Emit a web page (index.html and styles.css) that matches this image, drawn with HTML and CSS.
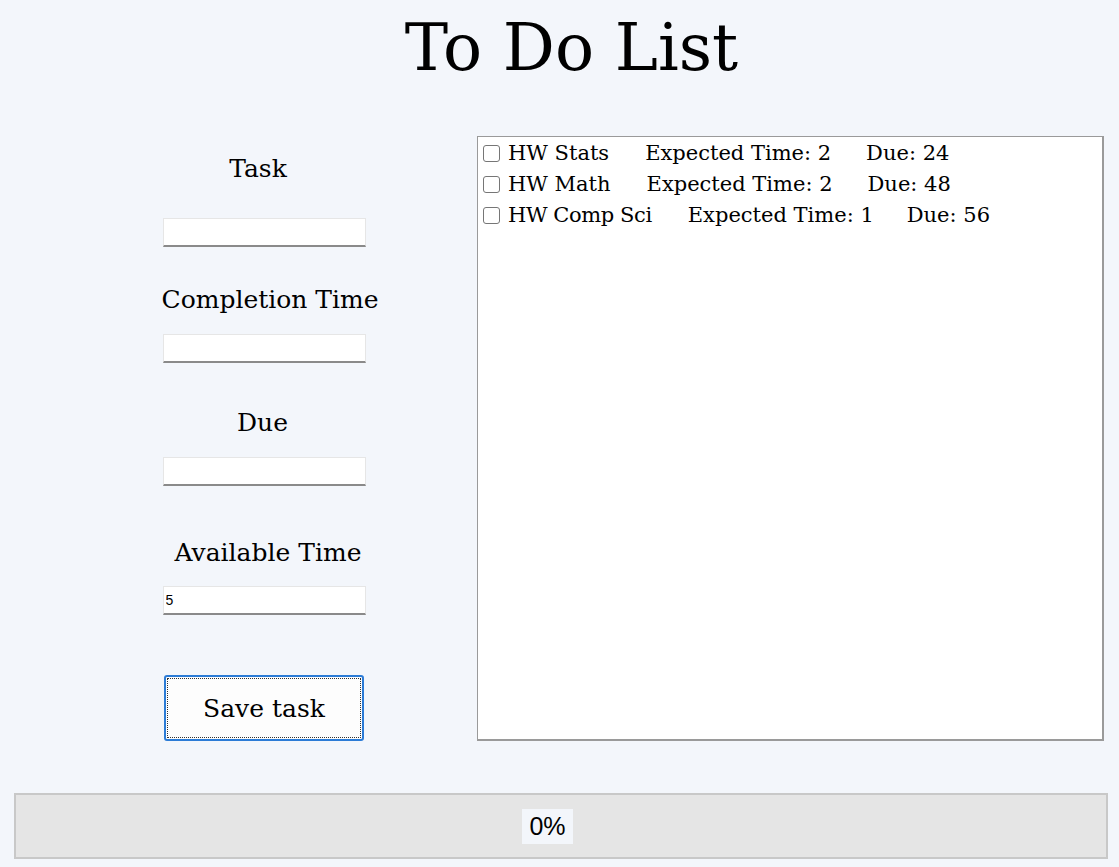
FILE: index.html
```html
<!DOCTYPE html>
<html>
<head>
<meta charset="utf-8">
<title>To Do List</title>
<link rel="stylesheet" href="styles.css">
</head>
<body>
<h1 class="title">To Do List</h1>
<div class="main">
  <div class="form">
    <label class="lbl lbl-task">Task</label>
    <input class="field f-task" type="text">
    <label class="lbl lbl-comp">Completion Time</label>
    <input class="field f-comp" type="text">
    <label class="lbl lbl-due">Due</label>
    <input class="field f-due" type="text">
    <label class="lbl lbl-avail">Available Time</label>
    <input class="field f-avail" type="text" value="5">
    <button class="save">Save task</button>
  </div>
  <div class="list">
    <div class="item"><span class="box"></span><span class="name">HW Stats</span><span class="exp">Expected Time: 2</span><span class="due">Due: 24</span></div>
    <div class="item"><span class="box"></span><span class="name">HW Math</span><span class="exp">Expected Time: 2</span><span class="due">Due: 48</span></div>
    <div class="item"><span class="box"></span><span class="name name-short">HW Comp Sci</span><span class="exp">Expected Time: 1</span><span class="due due-short">Due: 56</span></div>
  </div>
</div>
<div class="progress"><span class="pct">0%</span></div>
</body>
</html>
```
FILE: styles.css
```css
html, body {
  margin: 0;
  padding: 0;
  background: #f3f6fb;
}
body {
  font-family: "DejaVu Serif", "Liberation Serif", serif;
  color: #000;
  width: 1119px;
  height: 867px;
  overflow: hidden;
}
.title {
  margin: 0;
  padding-top: 8px;
  padding-left: 24px;
  text-align: center;
  font-weight: normal;
  font-size: 65px;
  line-height: 80px;
  height: 120px;
}
.main {
  display: flex;
  align-items: flex-start;
}
.form {
  width: 230px;
  margin-left: 150px;
  display: flex;
  flex-direction: column;
  align-items: center;
}
.lbl {
  font-size: 25px;
  line-height: 30px;
  display: block;
}
.lbl-task { margin-top: 26px; margin-left: -14px; }
.lbl-comp { margin-top: 38px; margin-left: 10px; }
.lbl-due { margin-top: 45px; margin-left: -5px; }
.lbl-avail { margin-top: 52px; margin-left: 6px; }
.field {
  box-sizing: border-box;
  width: 203px;
  height: 29px;
  border: 1px solid #e6e6e6;
  border-bottom: 2px solid #8a8a8a;
  background: #fff;
  font-family: "Liberation Sans", Arial, sans-serif;
  font-size: 14px;
  padding: 2px 2px;
  margin-left: -2px;
}
.f-task { margin-top: 34px; }
.f-comp { margin-top: 19px; }
.f-due { margin-top: 19px; }
.f-avail { margin-top: 18px; }
.save {
  margin-top: 60px;
  margin-left: -2px;
  width: 200px;
  height: 66px;
  box-sizing: border-box;
  background: #fdfdfd;
  border: 2px solid #2b7bd6;
  border-radius: 3px;
  outline: 1px dotted #333;
  outline-offset: -4px;
  font-family: "DejaVu Serif", "Liberation Serif", serif;
  font-size: 25px;
  color: #000;
  padding: 0;
}
.list {
  margin-left: 97px;
  margin-top: 8px;
  width: 627px;
  height: 605px;
  box-sizing: border-box;
  background: #fff;
  border: 1px solid #9a9a9a;
  border-right-width: 2px;
  border-bottom-width: 2px;
  padding-top: 1px;
  padding-left: 5px;
}
.item {
  display: flex;
  align-items: center;
  font-size: 21px;
  line-height: 31px;
  height: 31px;
}
.box {
  width: 17px;
  height: 17px;
  border: 1.5px solid #767676;
  border-radius: 3px;
  background: #fff;
  margin-right: 8px;
  box-sizing: border-box;
}
.exp { margin-left: 36px; }
.due { margin-left: 35px; }
.name-short { letter-spacing: -0.4px; }
.due-short { margin-left: 33px; }
.progress {
  margin: 52px 11px 0 14px;
  height: 66px;
  box-sizing: border-box;
  background: #e5e5e5;
  border: 2px solid #c8c8c8;
  display: flex;
  align-items: center;
  justify-content: center;
}
.pct {
  font-family: "Liberation Sans", Arial, sans-serif;
  font-size: 25px;
  line-height: 35px;
  background: #f3f6fb;
  padding: 0 7px;
  margin-right: 27px;
}
```
